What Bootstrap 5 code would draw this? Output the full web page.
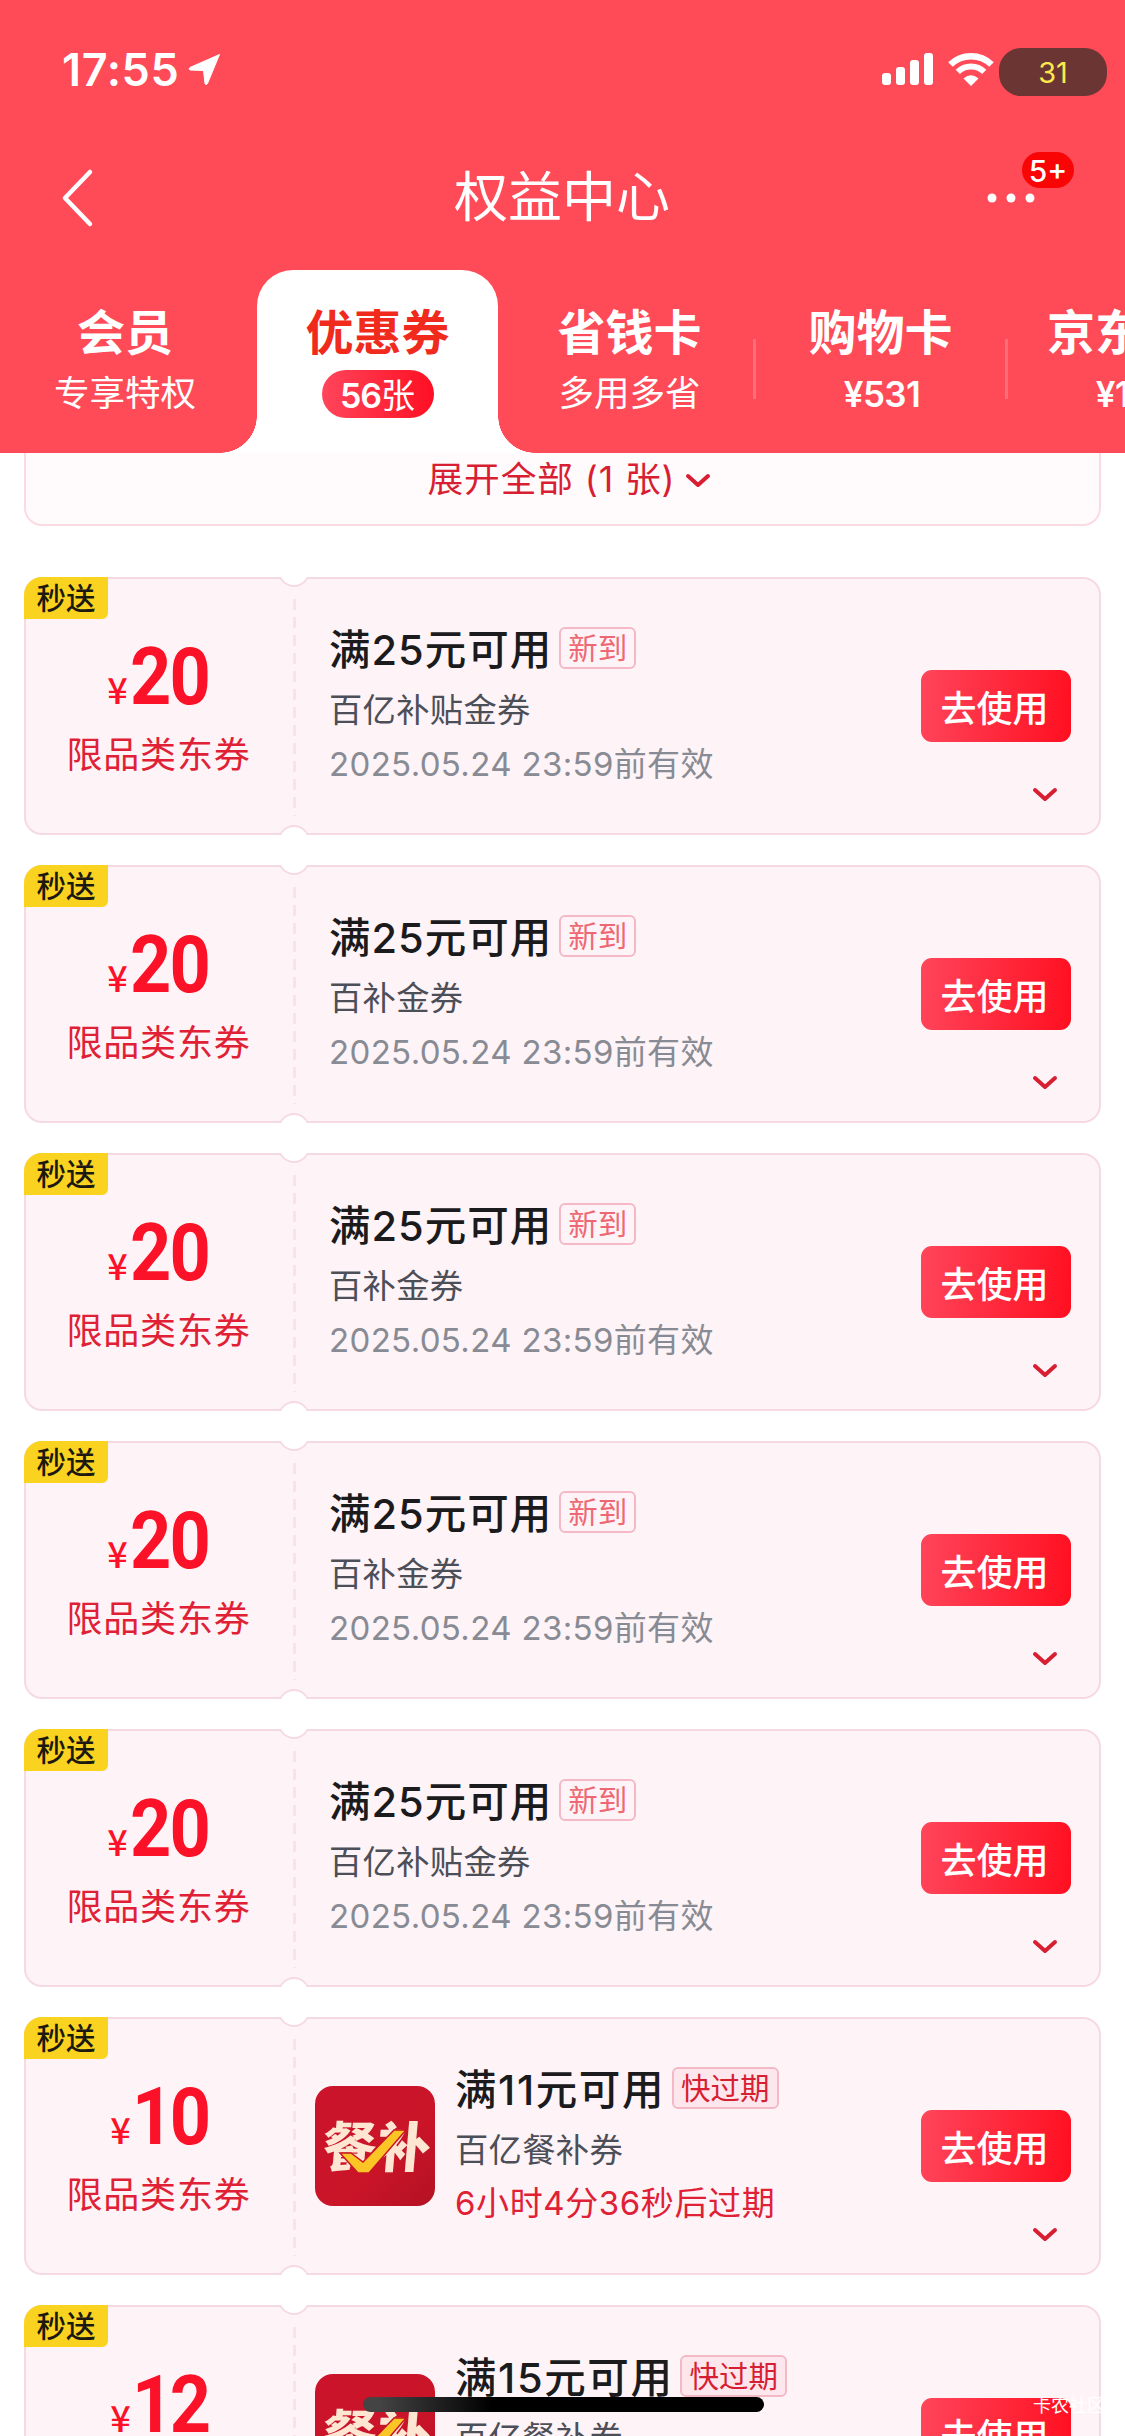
<!DOCTYPE html>
<html lang="zh-CN">
<head>
<meta charset="utf-8">
<meta name="viewport" content="width=device-width, initial-scale=1">
<title>权益中心</title>
<link href="https://cdn.jsdelivr.net/npm/bootstrap@5.3.0/dist/css/bootstrap.min.css" rel="stylesheet">
<style>
  body { font-family: Inter, "Noto Sans CJK SC", sans-serif; width: 1125px; height: 2436px; overflow: hidden; background: #fff; white-space: nowrap; }
  svg { display: block; flex: none; overflow: visible; }
  .top-area { height: 453px; background: #ff4a57; color: #fff; }
  .status-row { height: 136px; padding: 2px 18px 0 62px; }
  .clock { font-size: 45px; font-weight: 600; letter-spacing: .6px; line-height: 1; width: 127px; }
  .battery-pill { width: 108px; height: 48px; border-radius: 22px; background: #6b3534; color: #fbe94e; font-size: 29px; line-height: 49px; margin: 6px 0 0 5px; }
  .title-row { height: 134px; padding: 0 94px 10px 61px; display: grid; grid-template-columns: 1fr auto 1fr; align-items: center; column-gap: 0; }
  .page-title { font-size: 54px; line-height: 60px; font-weight: 400; margin: 0 -16px 0 16px; }
  .more-box { width: 46px; height: 20px; justify-self: end; margin-top: 10px; }
  .count-bubble { top: -41px; left: 37px; width: 52px; height: 36px; border-radius: 18px; background: #f90505; font-size: 30px; line-height: 39px; font-weight: 500; }
  .tab-strip { height: 183px; width: 1300px; }
  .tab-cell { padding-top: 38px; flex: none; }
  .tab-first { padding-right: 7px; }
  .tab-third { padding-left: 8px; }
  .tab-name { font-size: 48px; line-height: 50px; font-weight: 700; }
  .tab-note { font-size: 35.5px; line-height: 40px; margin-top: 16px; font-weight: 400; }
  .tab-money { font-size: 35px; font-weight: 600; letter-spacing: -.6px; padding-left: 3px; }
  .tab-on { background: #fff; color: #f02b1d; border-radius: 36px 36px 0 0; }
  .tab-on::before, .tab-on::after { content: ""; position: absolute; bottom: 0; width: 37px; height: 37px; }
  .tab-on::before { left: -37px; background: radial-gradient(circle at 0 0, transparent 36.5px, #fff 37px); }
  .tab-on::after { right: -37px; background: radial-gradient(circle at 100% 0, transparent 36.5px, #fff 37px); }
  .ticket-count { width: 112px; height: 48px; border-radius: 24px; margin-top: 12px; color: #fff; font-size: 34px; line-height: 52px; font-weight: 400; background: linear-gradient(90deg, #ff455b, #ff0f23); }
  .ticket-count b { font-weight: 600; letter-spacing: -1px; }
  .tab-rule { width: 3px; height: 60px; margin-top: 69px; background: rgba(255,255,255,.2); flex: none; }
  .list-area { padding: 0 24px; }
  .expand-card { height: 73px; border: 2px solid #fbdbe2; border-top: 0; border-radius: 0 0 18px 18px; background: #fffbfc; color: #d81e32; font-size: 35.7px; line-height: 40px; letter-spacing: .9px; padding: 6px 0 0 13px; margin-bottom: 51px; }
  .coupon { height: 258px; border: 2px solid #f6dae3; border-radius: 18px; background: #fef4f7; margin-bottom: 30px; }
  .notch { left: 252px; width: 32px; height: 32px; border: 2px solid #f6dae3; border-radius: 50%; background: #fff; }
  .notch-t { top: -24px; clip-path: inset(22px 0 0 0); }
  .notch-b { bottom: -24px; clip-path: inset(0 0 22px 0); }
  .perf { left: 267px; top: 20px; width: 3px; height: 217px; background: repeating-linear-gradient(180deg, #fce2e7 0 11px, transparent 11px 18px); }
  .corner-tag { top: -2px; left: -2px; width: 84px; height: 42px; border-radius: 18px 0 6px 0; background: #fad321; color: #1c1a10; font-size: 29.5px; line-height: 42px; font-weight: 500; }
  .value-side { width: 268px; padding: 61px 3px 0 0; color: #fb1228; flex: none; }
  .amount { height: 76px; }
  .yen { font-size: 36px; line-height: 40px; font-weight: 500; margin: 0 2px 8px 0; font-family: "Noto Sans CJK SC", sans-serif; }
  .digits { font-family: Roboto, sans-serif; font-size: 80px; line-height: 78px; font-weight: 700; letter-spacing: -2px; width: 80px; transform: scaleX(.9); transform-origin: 0 50%; text-align: left; }
  .digits-1 { letter-spacing: -4px; width: 75px; margin-left: -1px; }
  .value-note { color: #e02035; font-size: 36px; line-height: 44px; letter-spacing: .8px; margin-top: 17px; font-weight: 400; }
  .info-side { padding: 47px 0 0 35px; }
  .with-thumb { padding-left: 21px; }
  .thumb { border-radius: 18px; overflow: hidden; margin: 20px 20px 0 0; }
  .rule-text { font-size: 41.5px; line-height: 48px; font-weight: 500; color: #1b1a1c; letter-spacing: 1px; }
  .with-thumb .rule-text { letter-spacing: 1.6px; }
  .name-text { font-size: 33.3px; line-height: 54px; color: #4c4e58; font-weight: 400; letter-spacing: .3px; margin-top: 9px; }
  .date-text { font-size: 33px; line-height: 54px; color: #888b94; letter-spacing: .35px; font-weight: 400; }
  .late { color: #e02035; letter-spacing: .6px; margin-top: -1px; }
  .flag { height: 42px; border: 2px solid #f3b9c7; border-radius: 6px; color: #ee6873; font-size: 29.5px; line-height: 38px; padding: 0 7px; margin: 0 0 5px 7px; font-weight: 400; }
  .flag-late { background: #fde6ec; color: #d81e32; }
  .action-side { padding: 91px 28px 0 0; }
  .btn-use { width: 150px; height: 72px; border: 0; border-radius: 11px; padding: 2px 3px 0 0; color: #fff; font-size: 36px; line-height: 74px; font-weight: 500; background: linear-gradient(95deg, #ff455b, #ff0f20); }
  .action-side svg { margin: 45px 13px 0 0; }
  .home-bar { left: 363px; top: 2397px; width: 401px; height: 15px; border-radius: 8px; background: linear-gradient(90deg, #444 4%, #000 32%); z-index: 3; }
  .stamp { left: 1033px; top: 2393px; font-size: 18px; line-height: 26px; color: #fff; z-index: 3; }
</style>
</head>
<body class="position-relative">
<svg width="0" height="0" class="position-absolute">
  <defs>
    <symbol id="down" viewBox="0 0 26 16"><path d="M3 3 13 12 23 3" fill="none" stroke="#d81e32" stroke-width="4" stroke-linecap="round" stroke-linejoin="round"/></symbol>
    <linearGradient id="tile" x1="0" y1="0" x2="1" y2="1"><stop offset="0" stop-color="#cb142b"/><stop offset=".6" stop-color="#ca1428"/><stop offset="1" stop-color="#b41224"/></linearGradient>
    <symbol id="meal" viewBox="0 0 120 120">
      <rect width="120" height="120" fill="url(#tile)"/>
      <text transform="translate(6 81) skewX(-5)" font-family="Noto Sans CJK SC, sans-serif" font-size="54" font-weight="900" fill="#ffe6d3">餐补</text>
      <path d="M25 67H36L48 76 79 44H91L54 87H43Z" fill="#fcc526" stroke="#ca1428" stroke-width="1.500"/>
    </symbol>
  </defs>
</svg>

<header class="top-area overflow-hidden">
  <div class="status-row d-flex align-items-center">
    <span class="clock">17:55</span>
    <svg width="31" height="31" viewBox="0 0 31 31"><path d="M30.500 .5 1 13.500Q-1 15 1 16L14.500 16.500 16 29.500Q17 32 18.500 29.500Z" fill="#fff" stroke="#fff" stroke-linejoin="round"/></svg>
    <div class="ms-auto d-flex align-items-center">
      <svg width="52" height="34" viewBox="0 0 52 34" fill="#fff"><rect y="21" width="9" height="12" rx="3"/><rect x="14" y="15" width="9" height="18" rx="3"/><rect x="28" y="8" width="9" height="25" rx="3"/><rect x="42" y="1" width="9" height="32" rx="3"/></svg>
      <svg width="46" height="34" viewBox="0 0 46 34" style="margin-left:14px" fill="none" stroke="#fff"><path d="M2.500 12.500A29.500 29.500 0 0 1 43.500 12.500" stroke-width="6.500"/><path d="M9.800 19.800A19 19 0 0 1 36.200 19.800" stroke-width="6"/><path d="M15.500 26.500 23 34 30.500 26.500Q23 20 15.500 26.500Z" fill="#fff" stroke="none"/></svg>
      <div class="battery-pill text-center">31</div>
    </div>
  </div>
  <div class="title-row">
    <svg width="32" height="56" viewBox="0 0 32 56"><path d="M29 2 4 28 29 54" fill="none" stroke="#fff" stroke-width="4.500" stroke-linecap="round" stroke-linejoin="round"/></svg>
    <h1 class="page-title">权益中心</h1>
    <div class="more-box position-relative">
      <svg width="46" height="14" viewBox="0 0 46 14" fill="#fff"><circle cx="7" cy="5" r="4.500"/><circle cx="26" cy="5" r="4.500"/><circle cx="45" cy="5" r="4.500"/></svg>
      <span class="count-bubble position-absolute text-center">5+</span>
    </div>
  </div>
  <nav class="tab-strip d-flex">
    <div class="tab-cell tab-first text-center" style="width:257px"><div class="tab-name">会员</div><div class="tab-note">专享特权</div></div>
    <div class="tab-cell tab-on text-center position-relative" style="width:241px"><div class="tab-name">优惠券</div><div class="ticket-count mx-auto"><b>56</b>张</div></div>
    <div class="tab-cell tab-third text-center" style="width:255px"><div class="tab-name">省钱卡</div><div class="tab-note">多用多省</div></div>
    <div class="tab-rule"></div>
    <div class="tab-cell text-center" style="width:249px"><div class="tab-name">购物卡</div><div class="tab-note tab-money">¥531</div></div>
    <div class="tab-rule"></div>
    <div class="tab-cell text-center" style="width:251px"><div class="tab-name">京东E卡</div><div class="tab-note tab-money">¥100</div></div>
  </nav>
</header>

<main class="list-area">
  <div class="expand-card d-flex justify-content-center"><span>展开全部 (1 张)</span><svg width="26" height="16" style="margin:14px 0 0 9px"><use href="#down"/></svg></div>

  <section class="coupon position-relative d-flex">
    <div class="value-side text-center"><div class="amount d-flex justify-content-center align-items-end"><span class="yen">¥</span><span class="digits">20</span></div><div class="value-note">限品类东券</div></div>
    <div class="info-side"><div class="d-flex align-items-center"><span class="rule-text">满25元可用</span><span class="flag">新到</span></div><div class="name-text">百亿补贴金券</div><div class="date-text">2025.05.24 23:59前有效</div></div>
    <div class="action-side ms-auto d-flex flex-column align-items-end"><button class="btn btn-use">去使用</button><svg width="26" height="16"><use href="#down"/></svg></div>
    <i class="perf position-absolute"></i><i class="notch notch-t position-absolute"></i><i class="notch notch-b position-absolute"></i><span class="corner-tag position-absolute text-center">秒送</span>
  </section>

  <section class="coupon position-relative d-flex">
    <div class="value-side text-center"><div class="amount d-flex justify-content-center align-items-end"><span class="yen">¥</span><span class="digits">20</span></div><div class="value-note">限品类东券</div></div>
    <div class="info-side"><div class="d-flex align-items-center"><span class="rule-text">满25元可用</span><span class="flag">新到</span></div><div class="name-text">百补金券</div><div class="date-text">2025.05.24 23:59前有效</div></div>
    <div class="action-side ms-auto d-flex flex-column align-items-end"><button class="btn btn-use">去使用</button><svg width="26" height="16"><use href="#down"/></svg></div>
    <i class="perf position-absolute"></i><i class="notch notch-t position-absolute"></i><i class="notch notch-b position-absolute"></i><span class="corner-tag position-absolute text-center">秒送</span>
  </section>

  <section class="coupon position-relative d-flex">
    <div class="value-side text-center"><div class="amount d-flex justify-content-center align-items-end"><span class="yen">¥</span><span class="digits">20</span></div><div class="value-note">限品类东券</div></div>
    <div class="info-side"><div class="d-flex align-items-center"><span class="rule-text">满25元可用</span><span class="flag">新到</span></div><div class="name-text">百补金券</div><div class="date-text">2025.05.24 23:59前有效</div></div>
    <div class="action-side ms-auto d-flex flex-column align-items-end"><button class="btn btn-use">去使用</button><svg width="26" height="16"><use href="#down"/></svg></div>
    <i class="perf position-absolute"></i><i class="notch notch-t position-absolute"></i><i class="notch notch-b position-absolute"></i><span class="corner-tag position-absolute text-center">秒送</span>
  </section>

  <section class="coupon position-relative d-flex">
    <div class="value-side text-center"><div class="amount d-flex justify-content-center align-items-end"><span class="yen">¥</span><span class="digits">20</span></div><div class="value-note">限品类东券</div></div>
    <div class="info-side"><div class="d-flex align-items-center"><span class="rule-text">满25元可用</span><span class="flag">新到</span></div><div class="name-text">百补金券</div><div class="date-text">2025.05.24 23:59前有效</div></div>
    <div class="action-side ms-auto d-flex flex-column align-items-end"><button class="btn btn-use">去使用</button><svg width="26" height="16"><use href="#down"/></svg></div>
    <i class="perf position-absolute"></i><i class="notch notch-t position-absolute"></i><i class="notch notch-b position-absolute"></i><span class="corner-tag position-absolute text-center">秒送</span>
  </section>

  <section class="coupon position-relative d-flex">
    <div class="value-side text-center"><div class="amount d-flex justify-content-center align-items-end"><span class="yen">¥</span><span class="digits">20</span></div><div class="value-note">限品类东券</div></div>
    <div class="info-side"><div class="d-flex align-items-center"><span class="rule-text">满25元可用</span><span class="flag">新到</span></div><div class="name-text">百亿补贴金券</div><div class="date-text">2025.05.24 23:59前有效</div></div>
    <div class="action-side ms-auto d-flex flex-column align-items-end"><button class="btn btn-use">去使用</button><svg width="26" height="16"><use href="#down"/></svg></div>
    <i class="perf position-absolute"></i><i class="notch notch-t position-absolute"></i><i class="notch notch-b position-absolute"></i><span class="corner-tag position-absolute text-center">秒送</span>
  </section>

  <section class="coupon position-relative d-flex">
    <div class="value-side text-center"><div class="amount d-flex justify-content-center align-items-end"><span class="yen">¥</span><span class="digits digits-1">10</span></div><div class="value-note">限品类东券</div></div>
    <div class="info-side with-thumb d-flex"><svg class="thumb" width="120" height="120"><use href="#meal"/></svg><div><div class="d-flex align-items-center"><span class="rule-text">满11元可用</span><span class="flag flag-late">快过期</span></div><div class="name-text">百亿餐补券</div><div class="date-text late">6小时4分36秒后过期</div></div></div>
    <div class="action-side ms-auto d-flex flex-column align-items-end"><button class="btn btn-use">去使用</button><svg width="26" height="16"><use href="#down"/></svg></div>
    <i class="perf position-absolute"></i><i class="notch notch-t position-absolute"></i><i class="notch notch-b position-absolute"></i><span class="corner-tag position-absolute text-center">秒送</span>
  </section>

  <section class="coupon position-relative d-flex">
    <div class="value-side text-center"><div class="amount d-flex justify-content-center align-items-end"><span class="yen">¥</span><span class="digits digits-1">12</span></div></div>
    <div class="info-side with-thumb d-flex"><svg class="thumb" width="120" height="120"><use href="#meal"/></svg><div><div class="d-flex align-items-center"><span class="rule-text">满15元可用</span><span class="flag flag-late">快过期</span></div><div class="name-text">百亿餐补券</div></div></div>
    <div class="action-side ms-auto d-flex flex-column align-items-end"><button class="btn btn-use">去使用</button></div>
    <i class="perf position-absolute"></i><i class="notch notch-t position-absolute"></i><span class="corner-tag position-absolute text-center">秒送</span>
  </section>
</main>

<div class="home-bar position-absolute"></div>
<div class="stamp position-absolute">卡农社区</div>
<script src="https://cdn.jsdelivr.net/npm/bootstrap@5.3.0/dist/js/bootstrap.bundle.min.js"></script>
</body>
</html>
